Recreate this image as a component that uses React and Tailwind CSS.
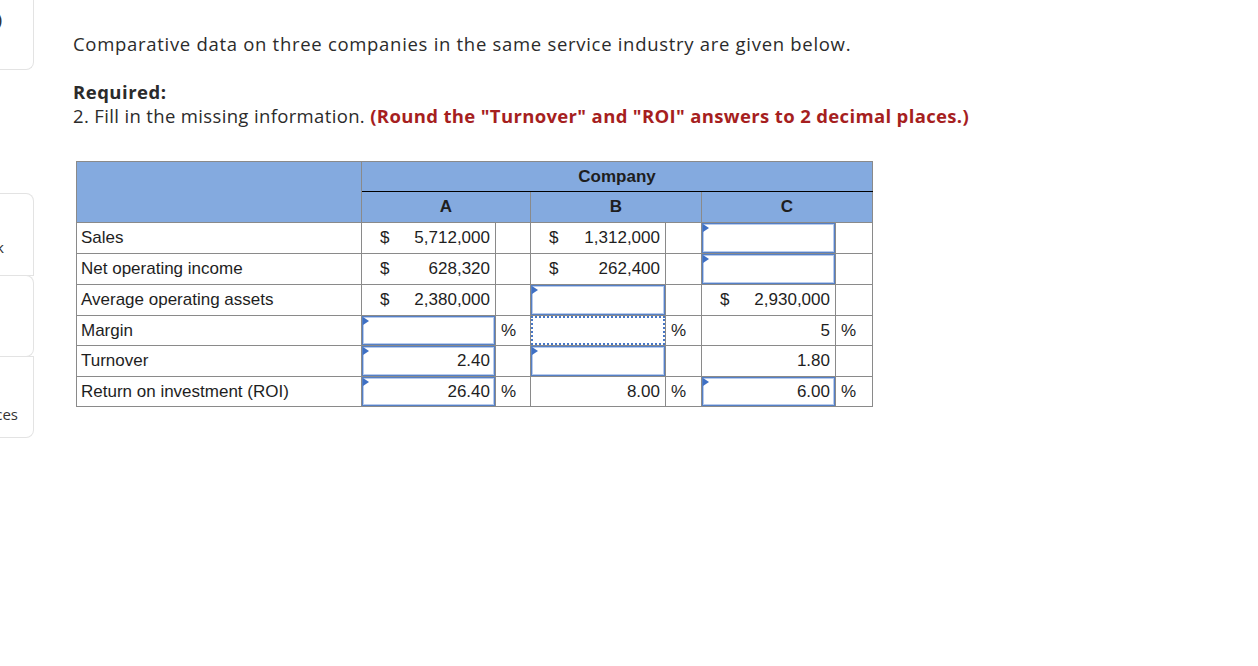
import React from 'react';

const grid = 'border border-[#8a8a8a]';

const Marker = () => (
  <span className="absolute left-[1px] top-[1px] h-0 w-0 border-y-[4px] border-l-[6px] border-y-transparent border-l-[#3f70c4]" />
);

// answer box (editable looking cell)
const InputCell = ({ value, h }) => (
  <td className={`${grid} relative p-0`}>
    <div
      className="flex items-center justify-end border border-[#5580c6] pr-[4px] shadow-[inset_0_0_0_1px_#b8cbec]"
      style={{ height: h - 1 }}
    >
      {value}
    </div>
    <Marker />
  </td>
);

const DottedCell = ({ h }) => (
  <td className={`${grid} p-0`}>
    <div className="border-2 border-dotted border-[#4676c6]" style={{ height: h - 1 }} />
  </td>
);

const MoneyCell = ({ value }) => (
  <td className={`${grid} px-0`}>
    <div className="flex items-center justify-between pl-[18px] pr-[5px]">
      <span>$</span>
      <span>{value}</span>
    </div>
  </td>
);

const NumCell = ({ value }) => (
  <td className={`${grid} pr-[5px] text-right`}>{value}</td>
);

const PctCell = ({ show }) => (
  <td className={`${grid} pl-[5px] text-left`}>{show ? '%' : ''}</td>
);

const Label = ({ children }) => <td className={`${grid} pl-[4px]`}>{children}</td>;

const SideCard = ({ text, pad, className }) => (
  <div className={`flex w-[34px] items-end justify-end overflow-hidden rounded-r-lg border border-l-0 border-[#e3e3e3] bg-white ${className}`}>
    <span className="whitespace-nowrap text-[15px] text-[#333]" style={{ paddingRight: pad }}>
      {text}
    </span>
  </div>
);

export default function App() {
  return (
    <div className="flex min-h-[666px] w-full bg-white" style={{ fontFamily: '"Open Sans", sans-serif' }}>
      {/* cut off sidebar */}
      <div className="flex w-[34px] shrink-0 flex-col">
        <div className="flex h-[70px] w-[34px] items-start justify-end overflow-hidden rounded-br-lg border-b border-r border-[#e3e3e3]">
          <span className="mt-[8px] pr-[31px] text-[16px] font-semibold text-[#333]">)</span>
        </div>
        <div className="mt-[123px] flex flex-col">
          <SideCard text="k" pad={29} className="h-[83px] pb-[17px] rounded-br-none" />
          <SideCard text="" pad={0} className="h-[82px] -mt-px rounded-none" />
          <SideCard text="ces" pad={15} className="h-[82px] -mt-px pb-[12px] rounded-tr-none" />
        </div>
      </div>

      <div className="flex flex-col pl-[39px] pt-[31px] text-[#2b2b2b]">
        <p className="text-[18.5px] leading-[26px] tracking-[0.7px]">
          Comparative data on three companies in the same service industry are given below.
        </p>
        <p className="mt-[23px] text-[18.5px] font-bold leading-[24px] tracking-[0.5px]">Required:</p>
        <p className="text-[18.5px] leading-[24px] tracking-[0.35px]">
          2. Fill in the missing information.{' '}
          <span className="font-bold text-[#a61f1f]">
            (Round the "Turnover" and "ROI" answers to 2 decimal places.)
          </span>
        </p>

        <table
          className="ml-[3px] mt-[33px] w-[796px] table-fixed border-collapse text-[17px] text-[#1e1e1e]"
          style={{ fontFamily: '"Liberation Sans", Arial, sans-serif' }}
        >
          <colgroup>
            <col className="w-[285px]" />
            <col className="w-[134px]" />
            <col className="w-[35px]" />
            <col className="w-[135px]" />
            <col className="w-[36px]" />
            <col className="w-[134px]" />
            <col className="w-[37px]" />
          </colgroup>
          <thead>
            <tr className="h-[30px]">
              <th rowSpan={2} className={`${grid} bg-[#84aadf]`} />
              <th colSpan={6} className="border border-[#8a8a8a] border-b-black bg-[#84aadf] text-center font-bold">
                Company
              </th>
            </tr>
            <tr className="h-[31px]">
              <th colSpan={2} className={`${grid} bg-[#84aadf] text-center font-bold`}>A</th>
              <th colSpan={2} className={`${grid} bg-[#84aadf] text-center font-bold`}>B</th>
              <th colSpan={2} className={`${grid} bg-[#84aadf] text-center font-bold`}>C</th>
            </tr>
          </thead>
          <tbody>
            <tr className="h-[31px]">
              <Label>Sales</Label>
              <MoneyCell value="5,712,000" />
              <PctCell />
              <MoneyCell value="1,312,000" />
              <PctCell />
              <InputCell h={31} />
              <PctCell />
            </tr>
            <tr className="h-[31px]">
              <Label>Net operating income</Label>
              <MoneyCell value="628,320" />
              <PctCell />
              <MoneyCell value="262,400" />
              <PctCell />
              <InputCell h={31} />
              <PctCell />
            </tr>
            <tr className="h-[31px]">
              <Label>Average operating assets</Label>
              <MoneyCell value="2,380,000" />
              <PctCell />
              <InputCell h={31} />
              <PctCell />
              <MoneyCell value="2,930,000" />
              <PctCell />
            </tr>
            <tr className="h-[30px]">
              <Label>Margin</Label>
              <InputCell h={30} />
              <PctCell show />
              <DottedCell h={30} />
              <PctCell show />
              <NumCell value="5" />
              <PctCell show />
            </tr>
            <tr className="h-[31px]">
              <Label>Turnover</Label>
              <InputCell h={31} value="2.40" />
              <PctCell />
              <InputCell h={31} />
              <PctCell />
              <NumCell value="1.80" />
              <PctCell />
            </tr>
            <tr className="h-[30px]">
              <Label>Return on investment (ROI)</Label>
              <InputCell h={30} value="26.40" />
              <PctCell show />
              <NumCell value="8.00" />
              <PctCell show />
              <InputCell h={30} value="6.00" />
              <PctCell show />
            </tr>
          </tbody>
        </table>
      </div>
    </div>
  );
}
